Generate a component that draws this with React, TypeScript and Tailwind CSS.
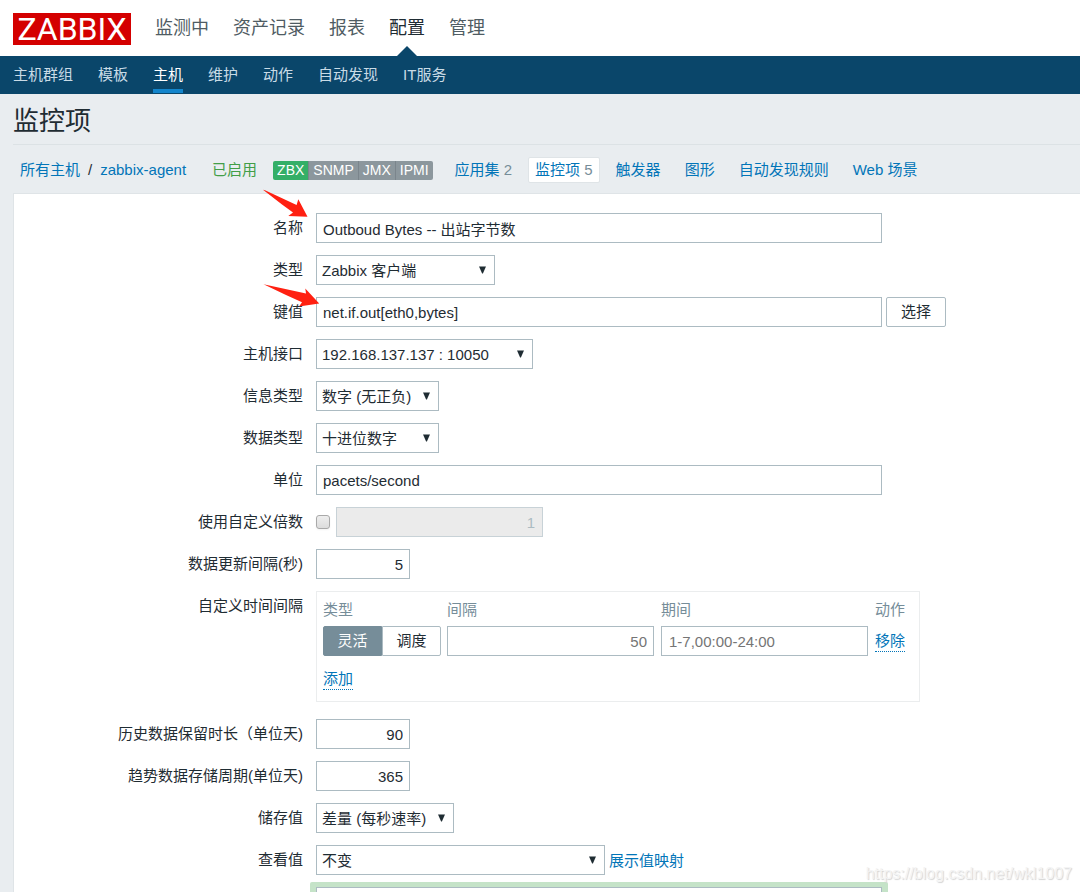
import React, { useState } from 'react';

const mainMenu = ['监测中', '资产记录', '报表', '配置', '管理'];
const subMenu = ['主机群组', '模板', '主机', '维护', '动作', '自动发现', 'IT服务'];
const interfaces = ['SNMP', 'JMX', 'IPMI'];

const inputClass = 'h-[30px] border border-[#acbbc2] bg-white px-1.5 text-[#1f2c33] outline-none';
const linkClass = 'text-[#0275b8]';
const dottedLinkClass = 'inline-block border-b border-dotted border-[#0275b8] leading-5 text-[#0275b8]';

interface RowProps {
  label: string;
  htmlFor?: string;
  children: React.ReactNode;
}

const Row: React.FC<RowProps> = ({ label, htmlFor, children }) => (
  <div className="flex items-start">
    <label htmlFor={htmlFor} className="mr-[13px] w-[289px] shrink-0 text-right leading-[30px]">
      {label}
    </label>
    <div className="flex grow items-center gap-1">{children}</div>
  </div>
);

interface SelectProps {
  id: string;
  value: string;
  className: string;
}

const Select: React.FC<SelectProps> = ({ id, value, className }) => (
  <div className={`relative ${className}`}>
    <select
      id={id}
      defaultValue={value}
      className="h-[30px] w-full appearance-none border border-[#acbbc2] bg-white pl-[5px] pr-6 pt-0.5 text-[#1f2c33] outline-none"
    >
      <option value={value}>{value}</option>
    </select>
    <svg className="pointer-events-none absolute right-2 top-[11px]" width="8" height="8" viewBox="0 0 8 8">
      <path d="M0 0.5h7L3.9 7.5h-0.8z" fill="#1f2c33" />
    </svg>
  </div>
);

const Header: React.FC = () => (
  <header>
    <div className="flex h-14 items-center gap-6 bg-white px-[13px]">
      <a
        href="#"
        className="mt-px flex h-8 w-[118px] items-center justify-center bg-[#d40000] font-[Roboto,sans-serif] text-[32px] leading-8 text-white"
      >
        ZABBIX
      </a>
      <nav className="flex h-full items-center gap-6 text-lg text-[#4f5c63]">
        {mainMenu.map((item) => (
          <a
            key={item}
            href="#"
            className={item === '配置' ? 'relative flex h-full items-center text-[#1f2c33]' : 'flex h-full items-center'}
          >
            {item}
            {item === '配置' && (
              <svg className="absolute bottom-0 left-1/2 -translate-x-1/2" width="20" height="10" viewBox="0 0 20 10">
                <path d="M0 10L10 0l10 10z" fill="#0a466a" />
              </svg>
            )}
          </a>
        ))}
      </nav>
    </div>
    <nav className="flex h-[38px] gap-[25px] bg-[#0a466a] px-[13px] pb-px text-[#c9dbe6]">
      {subMenu.map((item) => (
        <a
          key={item}
          href="#"
          className={
            item === '主机'
              ? 'border-b-4 border-[#1385cc] leading-[37px] text-white'
              : 'border-b-4 border-transparent leading-[37px]'
          }
        >
          {item}
        </a>
      ))}
    </nav>
  </header>
);

const HostBar: React.FC = () => (
  <div className="flex h-12 items-center pl-[7px] pt-0.5">
    <a href="#" className={linkClass}>所有主机</a>
    <span className="mx-2">/</span>
    <a href="#" className={linkClass}>zabbix-agent</a>
    <span className="ml-[26px] text-[#429e47]">已启用</span>
    <div className="ml-4 mr-[22px] flex h-[19px] overflow-hidden rounded-xs text-sm leading-[19px] text-white">
      <span className="bg-[#34af67] px-1">ZBX</span>
      {interfaces.map((name) => (
        <span key={name} className="border-l border-[#7b858c] bg-[#8c979d] px-1">{name}</span>
      ))}
    </div>
    <a href="#" className={linkClass}>
      应用集 <span className="text-[#768d99]">2</span>
    </a>
    <a href="#" className="mx-4 rounded-xs border border-[#dfe4e7] bg-white px-1.5 leading-6 text-[#0275b8]">
      监控项 <span className="text-[#768d99]">5</span>
    </a>
    <div className="flex gap-6">
      <a href="#" className={linkClass}>触发器</a>
      <a href="#" className={linkClass}>图形</a>
      <a href="#" className={linkClass}>自动发现规则</a>
      <a href="#" className={linkClass}>Web 场景</a>
    </div>
  </div>
);

const IntervalTable: React.FC = () => {
  const [mode, setMode] = useState('灵活');

  return (
    <div className="h-[111px] w-[604px] border border-[#ebedee] px-1.5">
      <table className="w-full table-fixed border-collapse">
        <thead>
          <tr className="h-[34px] text-left text-[#768d99]">
            <th className="w-[124px] pt-0.5 font-normal">类型</th>
            <th className="w-[214px] pt-0.5 font-normal">间隔</th>
            <th className="w-[214px] pt-0.5 font-normal">期间</th>
            <th className="pt-0.5 font-normal">动作</th>
          </tr>
        </thead>
        <tbody>
          <tr className="h-[30px]">
            <td>
              <div className="flex w-[118px] text-center leading-7">
                {['灵活', '调度'].map((name) => (
                  <label
                    key={name}
                    className={
                      mode === name
                        ? 'w-1/2 border border-[#768d99] bg-[#768d99] text-white first:rounded-l-xs last:rounded-r-xs'
                        : 'w-1/2 border border-[#acbbc2] bg-white first:rounded-l-xs last:rounded-r-xs'
                    }
                  >
                    <input
                      type="radio"
                      name="interval-type"
                      className="sr-only"
                      checked={mode === name}
                      onChange={() => setMode(name)}
                    />
                    {name}
                  </label>
                ))}
              </div>
            </td>
            <td>
              <input
                aria-label="间隔"
                placeholder="50"
                className="block h-[30px] w-[207px] border border-[#acbbc2] px-1.5 text-right outline-none placeholder:text-[#757575]"
              />
            </td>
            <td>
              <input
                aria-label="期间"
                placeholder="1-7,00:00-24:00"
                className="block h-[30px] w-[207px] border border-[#acbbc2] px-[7px] outline-none placeholder:text-[#757575]"
              />
            </td>
            <td>
              <button type="button" className={dottedLinkClass}>移除</button>
            </td>
          </tr>
          <tr className="h-[46px]">
            <td colSpan={4}>
              <button type="button" className={dottedLinkClass}>添加</button>
            </td>
          </tr>
        </tbody>
      </table>
    </div>
  );
};

// Red pointers next to the name and key fields
const Pointers: React.FC = () => (
  <svg
    className="pointer-events-none absolute -top-[5px] left-[248px]"
    width="58"
    height="120"
    viewBox="0 0 58 120"
    fill="#ff2011"
  >
    <path d="M1 0.7L3 1.2 34.6 16 36.3 10.3 45.5 27.8 26.3 27 31 23.5 20 15.5z" />
    <path d="M1.5 95.3L44 104.6 43.3 99.5 57.2 114.6 37 117.4 40 113.3 24 106z" />
  </svg>
);

const ItemForm: React.FC = () => {
  const [multiplier, setMultiplier] = useState(false);

  return (
    <form className="relative flex grow flex-col gap-3 border-l border-t border-[#dfe4e7] bg-white pt-[19px]">
      <Row label="名称" htmlFor="name">
        <input id="name" defaultValue="Outboud Bytes -- 出站字节数" className={`${inputClass} w-[566px]`} />
      </Row>
      <Row label="类型" htmlFor="type">
        <Select id="type" value="Zabbix 客户端" className="w-[179px]" />
      </Row>
      <Row label="键值" htmlFor="key">
        <input id="key" defaultValue="net.if.out[eth0,bytes]" className={`${inputClass} w-[566px]`} />
        <button type="button" className="h-[30px] w-[60px] rounded-xs border border-[#acbbc2] bg-white">
          选择
        </button>
      </Row>
      <Row label="主机接口" htmlFor="interface">
        <Select id="interface" value="192.168.137.137 : 10050" className="w-[217px]" />
      </Row>
      <Row label="信息类型" htmlFor="value-type">
        <Select id="value-type" value="数字 (无正负)" className="w-[123px]" />
      </Row>
      <Row label="数据类型" htmlFor="data-type">
        <Select id="data-type" value="十进位数字" className="w-[123px]" />
      </Row>
      <Row label="单位" htmlFor="units">
        <input id="units" defaultValue="pacets/second" className={`${inputClass} w-[566px]`} />
      </Row>
      <Row label="使用自定义倍数" htmlFor="multiplier">
        <input
          id="multiplier"
          type="checkbox"
          checked={multiplier}
          onChange={(e) => setMultiplier(e.target.checked)}
          className="mr-0.5 size-3.5 appearance-none rounded-[3px] border border-[#a9a9a9] bg-linear-to-b from-[#eeeeee] to-[#dcdcdc] shadow-xs checked:bg-[#768d99]"
        />
        <input
          aria-label="倍数"
          defaultValue="1"
          disabled={!multiplier}
          className="h-[30px] w-[207px] border border-[#c8d2d7] px-[7px] text-right disabled:bg-[#ebebeb] disabled:text-[#acbbc2]"
        />
      </Row>
      <Row label="数据更新间隔(秒)" htmlFor="delay">
        <input id="delay" defaultValue="5" className={`${inputClass} w-[94px] text-right`} />
      </Row>
      <div className="mb-[5px]">
        <Row label="自定义时间间隔">
          <IntervalTable />
        </Row>
      </div>
      <Row label="历史数据保留时长（单位天)" htmlFor="history">
        <input id="history" defaultValue="90" className={`${inputClass} w-[94px] text-right`} />
      </Row>
      <Row label="趋势数据存储周期(单位天)" htmlFor="trends">
        <input id="trends" defaultValue="365" className={`${inputClass} w-[94px] text-right`} />
      </Row>
      <Row label="储存值" htmlFor="delta">
        <Select id="delta" value="差量 (每秒速率)" className="w-[138px]" />
      </Row>
      <Row label="查看值" htmlFor="valuemap">
        <Select id="valuemap" value="不变" className="w-[289px]" />
        <a href="#" className={`${linkClass} pt-0.5`}>展示值映射</a>
      </Row>
      <Row label="">
        <div className="-mx-1.5 -mt-[5px] rounded-xs bg-[#c5e3c8] px-1.5 py-[5px]">
          <input aria-label="新的应用集" className={`${inputClass} block w-[566px]`} />
        </div>
      </Row>
      <Pointers />
    </form>
  );
};

const App: React.FC = () => {
  return (
    <div className="relative flex h-screen flex-col overflow-hidden bg-[#e9edf0] font-['Liberation_Sans','Noto_Sans_CJK_SC',sans-serif] text-[15px] text-[#1f2c33]">
      <Header />
      <main className="flex grow flex-col pl-[13px]">
        <h1 className="h-[51px] border-b border-[#dce2e5] text-[26px] leading-[54px]">监控项</h1>
        <HostBar />
        <ItemForm />
      </main>
      <div className="absolute bottom-2 right-2 text-base leading-5 text-[#f4f4f4] [text-shadow:1px_1px_1px_#d4d4d4]">
        https://blog.csdn.net/wkl1007
      </div>
    </div>
  );
};

export default App;
